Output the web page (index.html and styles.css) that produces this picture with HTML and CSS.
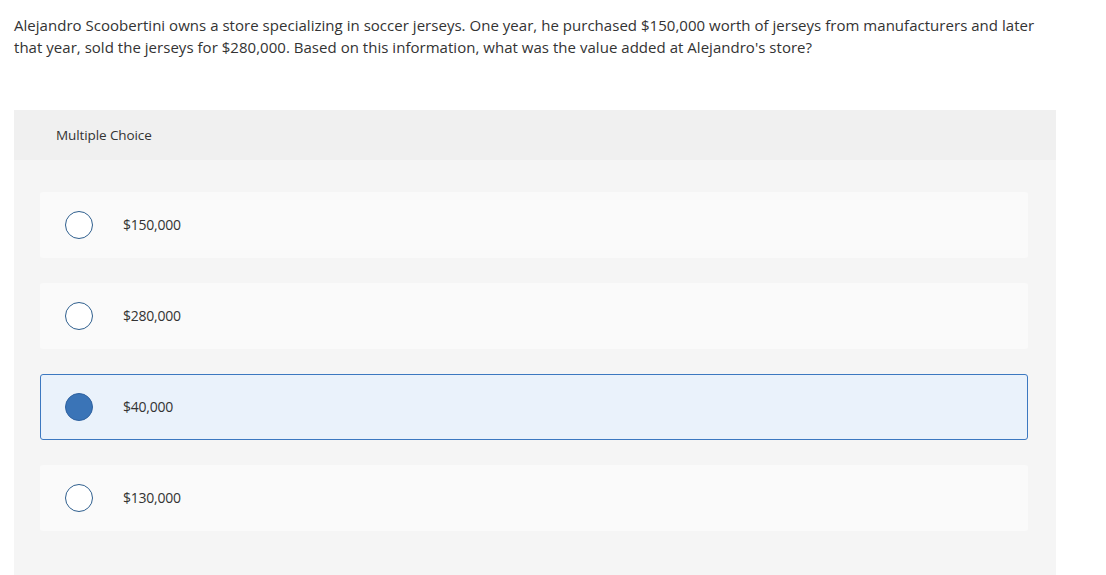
FILE: index.html
```html
<!DOCTYPE html>
<html>
<head>
<meta charset="utf-8">
<link rel="stylesheet" href="styles.css">
</head>
<body>
<div class="page">
  <p class="question">Alejandro Scoobertini owns a store specializing in soccer jerseys. One year, he purchased $150,000 worth of jerseys from manufacturers and later that year, sold the jerseys for $280,000. Based on this information, what was the value added at Alejandro's store?</p>
  <section class="panel">
    <div class="panel-head">Multiple Choice</div>
    <div class="options">
      <div class="option"><span class="radio"></span><span class="label">$150,000</span></div>
      <div class="option"><span class="radio"></span><span class="label">$280,000</span></div>
      <div class="option selected"><span class="radio"></span><span class="label">$40,000</span></div>
      <div class="option"><span class="radio"></span><span class="label">$130,000</span></div>
    </div>
  </section>
</div>
</body>
</html>
```
FILE: styles.css
```css
html, body {
  margin: 0;
  padding: 0;
  background: #ffffff;
  font-family: "Open Sans", Lato, "Liberation Sans", sans-serif;
  color: #333333;
}
.page {
  padding: 14px 50px 0 14px;
  height: 575px;
  box-sizing: border-box;
  display: flex;
  flex-direction: column;
}
.question {
  margin: 0;
  font-size: 15px;
  line-height: 22px;
  width: 1036px;
  letter-spacing: 0.03px;
}
.panel {
  margin-top: 52px;
  width: 1042px;
  flex: 1;
  background: #f5f5f5;
}
.panel-head {
  height: 50px;
  background: #f0f0f0;
  display: flex;
  align-items: center;
  padding-left: 42px;
  font-size: 13.5px;
  letter-spacing: -0.1px;
  color: #333;
}
.options {
  padding: 32px 28px 0 26px;
  display: flex;
  flex-direction: column;
  gap: 25px;
}
.option {
  height: 66px;
  box-sizing: border-box;
  background: #fafafa;
  border-radius: 3px;
  display: flex;
  align-items: center;
  padding-left: 25px;
  border: 1px solid transparent;
}
.option.selected {
  background: #eaf2fb;
  border-color: #3c78c0;
}
.radio {
  width: 28px;
  height: 28px;
  box-sizing: border-box;
  border-radius: 50%;
  border: 1.5px solid #2f5f8e;
  background: #ffffff;
  flex: none;
  margin-left: -1px;
}
.option.selected .radio {
  background: #3a74b7;
  border-color: #2f62a0;
}
.label {
  margin-left: 30px;
  padding-bottom: 2px;
  font-size: 14px;
  letter-spacing: -0.25px;
  color: #333;
}
```
